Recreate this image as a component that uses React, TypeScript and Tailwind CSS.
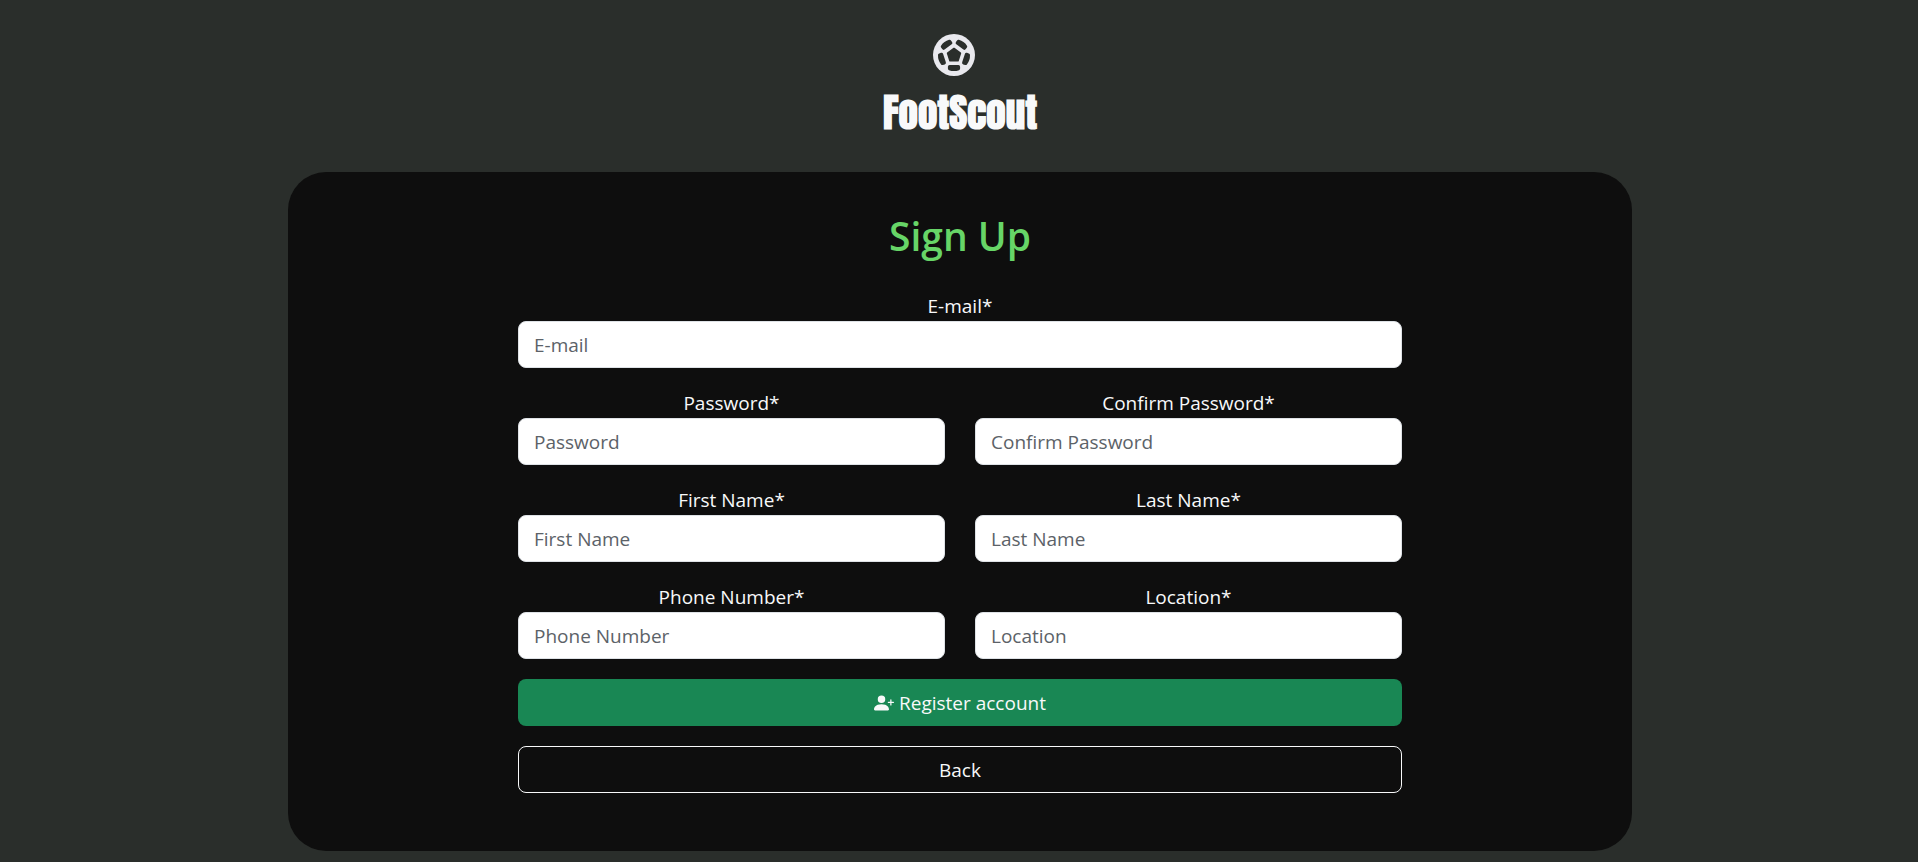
import { BsPersonPlusFill } from "react-icons/bs";

type FieldProps = { id: string; label: string; type?: string; wide?: boolean };

function Field({ id, label, type = "text", wide = false }: FieldProps) {
  return (
    <div className={wide ? "flex flex-col sm:col-span-2" : "flex flex-col"}>
      <label htmlFor={id} className="text-center">{label}*</label>
      <input
        id={id}
        type={type}
        placeholder={label}
        required
        className="w-full rounded-lg border border-[#dee2e6] bg-white px-[15px] pt-[9px] pb-[7px] leading-[29px] text-[#212529] placeholder:text-[#5c6268]"
      />
    </div>
  );
}

function BallLogo() {
  return (
    <svg viewBox="0 0 42 42" className="size-[42px] text-[#e9e9ee]" aria-hidden="true">
      <circle cx="21" cy="21" r="21" fill="currentColor" />
      <g fill="#2a2e2b" stroke="#2a2e2b" strokeLinejoin="round">
        <path strokeWidth="1.6" d="M21 14.5L27.4 19.2L25 26.8H17L14.6 19.2Z" />
        {[0, 72, 144, 216, 288].map((angle) => (
          <path key={angle} transform={`rotate(${angle} 21 21)`} strokeWidth="3.4" d="M16.6 32.7H25.4V34.6Q21 36.2 16.6 34.6Z" />
        ))}
      </g>
    </svg>
  );
}

export default function App() {
  return (
    <main className="flex min-h-screen flex-col items-center bg-[#2a2e2b] pb-[11px] pl-0.5 font-['Segoe_UI','Open_Sans',sans-serif] text-[19px] leading-[30px] text-[#f8f9fa]">
      <header className="flex flex-col items-center pt-[34px]">
        <div className="pr-3"><BallLogo /></div>
        <h1 className="mt-[13px] mb-[35px] font-['Impact','Anton','Roboto',sans-serif] text-[39px] leading-[48px] font-black">FootScout</h1>
      </header>
      <section className="w-full max-w-[1344px] rounded-[38px] bg-[#0e0e0e] px-6 pt-10 pb-[58px]">
        <form className="mx-auto flex max-w-[884px] flex-col gap-5">
          <h2 className="mb-[11px] text-center text-[39px] leading-[48px] font-semibold text-[#67d567]">Sign Up</h2>
          <div className="grid gap-x-[30px] gap-y-5 sm:grid-cols-2">
            <Field id="email" label="E-mail" type="email" wide />
            <Field id="password" label="Password" type="password" />
            <Field id="confirm-password" label="Confirm Password" type="password" />
            <Field id="first-name" label="First Name" />
            <Field id="last-name" label="Last Name" />
            <Field id="phone" label="Phone Number" type="tel" />
            <Field id="location" label="Location" />
          </div>
          <button type="submit" className="flex h-[47px] items-center justify-center gap-[5px] rounded-lg bg-[#198754]">
            <BsPersonPlusFill className="size-5" />
            Register account
          </button>
          <button type="button" className="h-[47px] rounded-lg border border-[#f8f9fa]">Back</button>
        </form>
      </section>
    </main>
  );
}
